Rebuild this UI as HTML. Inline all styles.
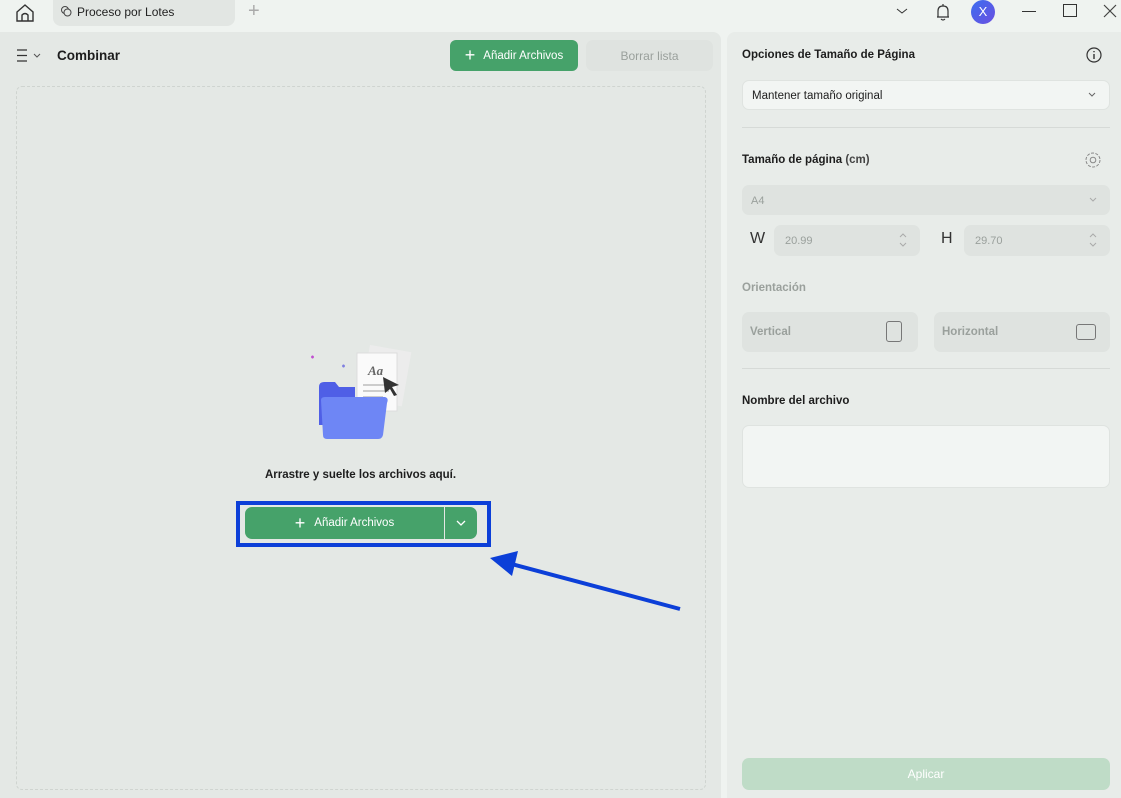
<!DOCTYPE html>
<html><head><meta charset="utf-8"><style>
*{box-sizing:border-box;margin:0;padding:0}
body{width:1121px;height:798px;overflow:hidden;background:#eff3f0;font-family:"Liberation Sans",sans-serif;position:relative;color:#1d1d1d}
.a{position:absolute}
.left{left:0;top:32px;width:721px;height:766px;background:#e4e8e5;border-top-right-radius:8px}
.right{left:727px;top:32px;width:394px;height:766px;background:#e8ece9;border-top-left-radius:8px}
.btn{background:#46a26a;color:#fff;border-radius:6px;font-size:11.5px;display:flex;align-items:center;justify-content:center}
.inp{background:#f2f5f3;border:1px solid #dfe3e0;border-radius:7px}
.dis{background:#dfe3e0;border-radius:7px;color:#9aa09c;font-size:11px}
.lbl{font-size:11.5px;font-weight:bold}
</style></head><body>
<svg class="a" style="left:14px;top:3px" width="22" height="20" viewBox="0 0 22 20"><path d="M3 9 L11 2 L19 9 V18 H3 Z M8 18 V12 Q11 9 14 12 V18" fill="none" stroke="#333" stroke-width="1.4"/></svg>
<div class="a" style="left:53px;top:0;width:182px;height:26px;background:#e2e6e3;border-radius:0 0 8px 8px"></div>
<svg class="a" style="left:60px;top:5px" width="12" height="12"><circle cx="5" cy="5" r="3.5" fill="none" stroke="#444"/><circle cx="7.5" cy="7.5" r="3.5" fill="#e2e6e3" stroke="#444"/></svg>
<div class="a" style="left:77px;top:5px;font-size:12px;color:#222">Proceso por Lotes</div>
<div class="a" style="left:248px;top:0;font-size:20px;color:#aaa;font-weight:200">+</div>
<svg class="a" style="left:895px;top:6px" width="14" height="10"><path d="M2 3 L7 7 L12 3" fill="none" stroke="#333"/></svg>
<svg class="a" style="left:933px;top:2px" width="20" height="20"><path d="M4 15 H16 M5 15 V9 Q5 4 10 4 Q15 4 15 9 V15 M8 17 Q10 19 12 17 M10 2 V4" fill="none" stroke="#333" stroke-width="1.2"/></svg>
<div class="a" style="left:971px;top:0;width:24px;height:24px;border-radius:50%;background:linear-gradient(135deg,#3b6ef0,#6b4fe0);color:#fff;font-size:13px;text-align:center;line-height:24px">X</div>
<div class="a" style="left:1022px;top:11px;width:14px;height:1px;background:#333"></div>
<div class="a" style="left:1063px;top:4px;width:14px;height:13px;border:1.3px solid #333"></div>
<svg class="a" style="left:1102px;top:3px" width="16" height="16"><path d="M2 2 L14 14 M14 2 L2 14" stroke="#444" stroke-width="1.2"/></svg>

<div class="a left"></div>
<div class="a right"></div>
<svg class="a" style="left:16px;top:48px" width="28" height="16"><path d="M1 2 H11 M1 7.5 H11 M1 13 H11" stroke="#333" stroke-width="1.2"/><path d="M18 6 L21 9 L24 6" fill="none" stroke="#555"/></svg>
<div class="a" style="left:57px;top:48px;font-size:13.5px;font-weight:bold">Combinar</div>
<div class="a btn" style="left:450px;top:40px;width:128px;height:31px"><span style="font-size:18px;font-weight:300;margin-right:8px">+</span>Añadir Archivos</div>
<div class="a dis" style="left:586px;top:40px;width:127px;height:31px;display:flex;align-items:center;justify-content:center;font-size:12px">Borrar lista</div>
<div class="a" style="left:16px;top:86px;width:690px;height:704px;border:1.5px dashed #cfd4d0;border-radius:6px"></div>
<svg class="a" style="left:305px;top:345px" width="115" height="100" viewBox="0 0 115 100">
<path d="M6 12 l3 0 M7.5 10.5 l0 3" stroke="#c050d0" stroke-width="1.5"/>
<path d="M37 21 l3 0 M38.5 19.5 l0 3" stroke="#8080e0" stroke-width="1.5"/>
<rect x="60" y="3" width="42" height="55" fill="#ececec" transform="rotate(10 80 30)"/>
<rect x="52" y="8" width="40" height="58" fill="#fafafa" stroke="#ddd"/>
<text x="63" y="30" font-size="13" font-style="italic" font-weight="bold" fill="#666" font-family="Liberation Serif,serif">Aa</text>
<path d="M58 40 H84 M58 46 H84 M58 52 H78" stroke="#ccc" stroke-width="2"/>
<path d="M78 32 L94 40 L87 42 L92 50 L89 51 L85 44 L80 48 Z" fill="#333"/>
<path d="M14 42 Q14 37 19 37 H30 L34 42 H50 V80 H14 Z" fill="#4f5fe6"/>
<path d="M16 55 Q16 52 20 52 H80 Q84 53 82 58 L78 90 Q77 94 73 94 H22 Q18 94 18 90 Z" fill="#6e86f5"/>
</svg>
<div class="a" style="left:0;width:721px;top:469px;text-align:center;font-size:11.5px;font-weight:bold">Arrastre y suelte los archivos aquí.</div>
<div class="a" style="left:236px;top:501px;width:255px;height:46px;border:4px solid #0c3fd8"></div>
<div class="a btn" style="left:245px;top:507px;width:199px;height:32px;border-radius:7px 0 0 7px"><span style="font-size:18px;font-weight:300;margin-right:9px">+</span>Añadir Archivos</div>
<div class="a btn" style="left:445px;top:507px;width:32px;height:32px;border-radius:0 7px 7px 0"><svg width="12" height="8"><path d="M2 2 L6 6 L10 2" fill="none" stroke="#fff" stroke-width="1.3"/></svg></div>
<svg class="a" style="left:488px;top:545px" width="200" height="70"><path d="M192 64 L20 18" stroke="#0c3fd8" stroke-width="4"/><path d="M2 13 L30 6 L24 31 Z" fill="#0c3fd8"/></svg>
<div class="a lbl" style="left:742px;top:49px">Opciones de Tamaño de Página</div>
<svg class="a" style="left:1085px;top:46px" width="18" height="18"><circle cx="9" cy="9" r="7" fill="none" stroke="#333" stroke-width="1.2"/><path d="M9 8 V13 M9 5 V6.3" stroke="#333" stroke-width="1.4"/></svg>
<div class="a inp" style="left:742px;top:80px;width:368px;height:30px;font-size:11.5px;padding:9px 0 0 9px">Mantener tamaño original</div>
<svg class="a" style="left:1087px;top:91px" width="10" height="8"><path d="M2 2 L5 5 L8 2" fill="none" stroke="#666"/></svg>
<div class="a" style="left:742px;top:127px;width:368px;height:1px;background:#d6dad7"></div>
<div class="a lbl" style="left:742px;top:154px">Tamaño de página <span style="color:#444">(cm)</span></div>
<svg class="a" style="left:1083px;top:150px" width="20" height="20"><circle cx="10" cy="10" r="2.8" fill="none" stroke="#888"/><circle cx="10" cy="10" r="7" fill="none" stroke="#888" stroke-dasharray="3 1.4"/></svg>
<div class="a dis" style="left:742px;top:185px;width:368px;height:30px;padding:10px 0 0 9px">A4</div>
<svg class="a" style="left:1088px;top:196px" width="10" height="8"><path d="M2 2 L5 5 L8 2" fill="none" stroke="#aaa"/></svg>
<div class="a" style="left:750px;top:230px;font-size:16px;color:#333;font-weight:300">W</div>
<div class="a dis" style="left:774px;top:225px;width:146px;height:31px;padding:10px 0 0 11px">20.99</div>
<svg class="a" style="left:898px;top:231px" width="10" height="18"><path d="M2 6 L5 3 L8 6 M2 12 L5 15 L8 12" fill="none" stroke="#aaa"/></svg>
<div class="a" style="left:941px;top:230px;font-size:16px;color:#333;font-weight:300">H</div>
<div class="a dis" style="left:964px;top:225px;width:146px;height:31px;padding:10px 0 0 11px">29.70</div>
<svg class="a" style="left:1088px;top:231px" width="10" height="18"><path d="M2 6 L5 3 L8 6 M2 12 L5 15 L8 12" fill="none" stroke="#aaa"/></svg>
<div class="a" style="left:742px;top:282px;font-size:11.5px;font-weight:bold;color:#9aa09c">Orientación</div>
<div class="a dis" style="left:742px;top:312px;width:176px;height:40px;padding:14px 0 0 8px;font-size:11.5px;font-weight:bold">Vertical</div>
<div class="a" style="left:886px;top:321px;width:16px;height:21px;border:1.2px solid #777;border-radius:3px"></div>
<div class="a dis" style="left:934px;top:312px;width:176px;height:40px;padding:14px 0 0 8px;font-size:11.5px;font-weight:bold">Horizontal</div>
<div class="a" style="left:1076px;top:324px;width:20px;height:16px;border:1.2px solid #777;border-radius:3px"></div>
<div class="a" style="left:742px;top:368px;width:368px;height:1px;background:#d6dad7"></div>
<div class="a lbl" style="left:742px;top:395px">Nombre del archivo</div>
<div class="a inp" style="left:742px;top:425px;width:368px;height:63px"></div>
<div class="a" style="left:742px;top:758px;width:368px;height:32px;background:#bfdcc7;border-radius:7px;color:#fff;font-size:12px;text-align:center;line-height:32px">Aplicar</div>
</body></html>
